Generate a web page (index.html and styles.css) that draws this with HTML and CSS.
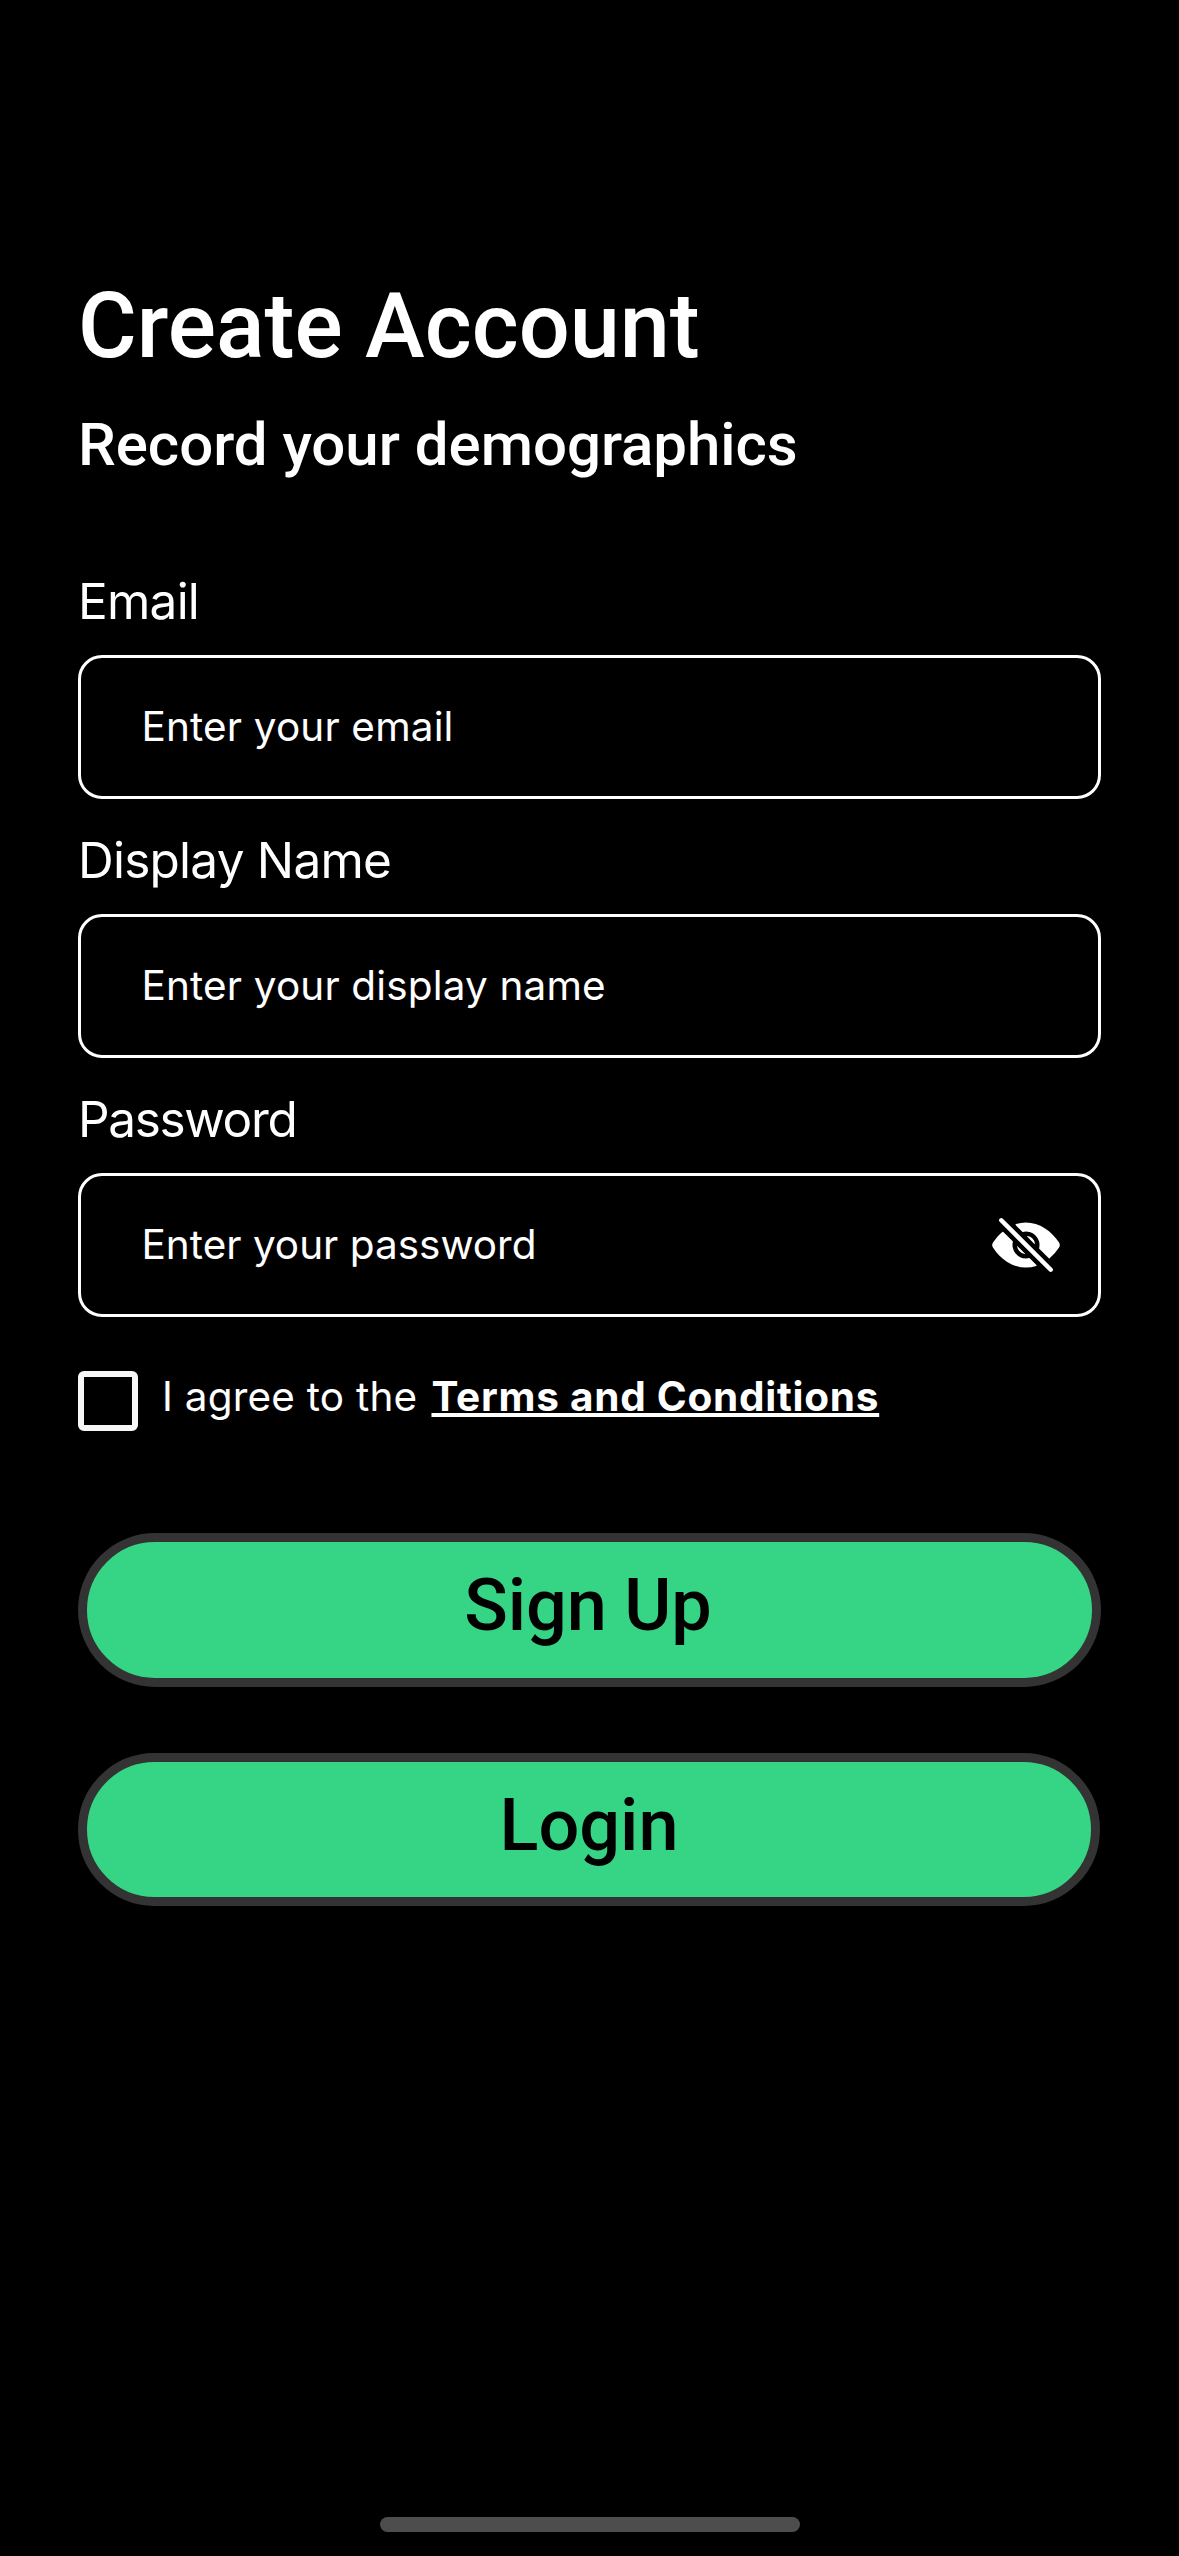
FILE: index.html
```html
<!DOCTYPE html>
<html lang="en">
<head>
<meta charset="utf-8">
<meta name="viewport" content="width=device-width">
<title>Create Account</title>
<link rel="stylesheet" href="styles.css">
</head>
<body>
<main class="screen">
  <h1 class="title">Create Account</h1>
  <h2 class="subtitle">Record your demographics</h2>

  <form class="form">
    <div class="field-group">
      <div class="label">Email</div>
      <div class="field"><span class="placeholder">Enter your email</span></div>
    </div>
    <div class="field-group">
      <div class="label">Display Name</div>
      <div class="field"><span class="placeholder">Enter your display name</span></div>
    </div>
    <div class="field-group">
      <div class="label label-password">Password</div>
      <div class="field">
        <span class="placeholder placeholder-password">Enter your password</span>
        <svg class="eye" viewBox="0 0 512 512" fill="currentColor" aria-hidden="true">
          <path d="M432 448a15.92 15.92 0 01-11.31-4.69l-352-352a16 16 0 0122.62-22.62l352 352A16 16 0 01432 448zM248 315.85l-51.79-51.79a2 2 0 00-3.39 1.69 64.11 64.11 0 0053.49 53.49 2 2 0 001.69-3.39zM264 196.15L315.87 248a2 2 0 003.4-1.69 64.13 64.13 0 00-53.55-53.55 2 2 0 00-1.72 3.39z"/>
          <path d="M491 273.36a32.2 32.2 0 00-.1-34.76c-26.46-40.92-60.79-75.68-99.27-100.53C349 110.55 302 96 255.68 96a226.54 226.54 0 00-71.82 11.79 4 4 0 00-1.56 6.63l47.24 47.24a4 4 0 003.82 1.05 96 96 0 01116 116 4 4 0 001.05 3.81l67.95 68a4 4 0 005.4.24 343.81 343.81 0 0067.24-77.4zM256 352a96 96 0 01-93.3-118.63 4 4 0 00-1.05-3.81l-66.84-66.87a4 4 0 00-5.41-.23c-24.39 20.81-47 46.13-67.67 75.72a31.92 31.92 0 00-.64 35.54c26.41 41.33 60.39 76.14 98.28 100.65C162.06 402 207.92 416 255.68 416a238.22 238.22 0 0072.64-11.55 4 4 0 001.61-6.64l-47.47-47.46a4 4 0 00-3.81-1.05A96 96 0 01256 352z"/>
        </svg>
      </div>
    </div>

    <div class="agreement">
      <span class="checkbox"></span>
      <span class="agreement-text">I agree to the</span>
      <a class="terms">Terms and Conditions</a>
    </div>

    <div class="actions">
      <button class="button" type="button">Sign Up</button>
      <button class="button button-login" type="button">Login</button>
    </div>
  </form>

  <div class="home-indicator"></div>
</main>
</body>
</html>
```
FILE: styles.css
```css
* {
  box-sizing: border-box;
}

body {
  margin: 0;
  background: #000;
  color: #fff;
  font-family: Inter, "Liberation Sans", sans-serif;
}

.screen {
  display: flex;
  flex-direction: column;
  height: 2556px;
  padding: 274px 78px 24px;
}

.title,
.subtitle {
  margin: 0;
  font-family: Roboto, sans-serif;
  font-weight: 500;
  white-space: nowrap;
}

.title {
  font-size: 90px;
  line-height: 106px;
}

.subtitle {
  margin-top: 29px;
  font-size: 60px;
  line-height: 71px;
  letter-spacing: -0.03px;
}

.form {
  display: flex;
  flex-direction: column;
  gap: 31px;
  margin-top: 91px;
}

.field-group {
  display: flex;
  flex-direction: column;
  gap: 24px;
}

.label {
  height: 60px;
  font-size: 49.5px;
  line-height: 60px;
  letter-spacing: -0.76px;
}

.label-password {
  letter-spacing: -1.34px;
}

.field {
  display: flex;
  justify-content: space-between;
  align-items: flex-start;
  height: 144px;
  padding: 33px 36px 0 60.5px;
  border: 3px solid #fff;
  border-radius: 24px;
}

.placeholder {
  margin-top: 11px;
  font-size: 40.5px;
  line-height: 49px;
  letter-spacing: 0.15px;
}

.placeholder-password {
  letter-spacing: 0;
}

.eye {
  width: 72px;
  height: 72px;
}

.agreement {
  display: flex;
  align-items: flex-start;
  height: 60px;
  margin-top: 23px;
  font-size: 40.5px;
  line-height: 49px;
  white-space: nowrap;
}

.checkbox {
  width: 60px;
  height: 60px;
  border: 6px solid #f7f7f7;
  border-radius: 6px;
}

.agreement-text {
  margin: 1px 14px 0 24px;
  letter-spacing: 0.22px;
}

.terms {
  margin-top: 1px;
  font-weight: 700;
  letter-spacing: 0.74px;
  text-decoration: underline;
  text-decoration-thickness: 4px;
  text-underline-offset: 2px;
  text-decoration-skip-ink: none;
}

.actions {
  display: flex;
  flex-direction: column;
  gap: 66px;
  margin-top: 71px;
}

.button {
  display: flex;
  justify-content: center;
  align-items: flex-start;
  height: 154px;
  padding: 21px 3px 0 0;
  border: 9px solid #333;
  border-radius: 77px;
  background: #36d586;
  color: #000;
  font-family: Roboto, sans-serif;
  font-size: 72px;
  font-weight: 500;
  line-height: 85px;
  letter-spacing: -0.15px;
}

.button-login {
  width: 1022px;
  height: 153px;
  padding-right: 0;
  letter-spacing: 0;
}

.home-indicator {
  align-self: center;
  width: 420px;
  height: 15px;
  margin-top: auto;
  border-radius: 8px;
  background: #4d4d4d;
}
```
